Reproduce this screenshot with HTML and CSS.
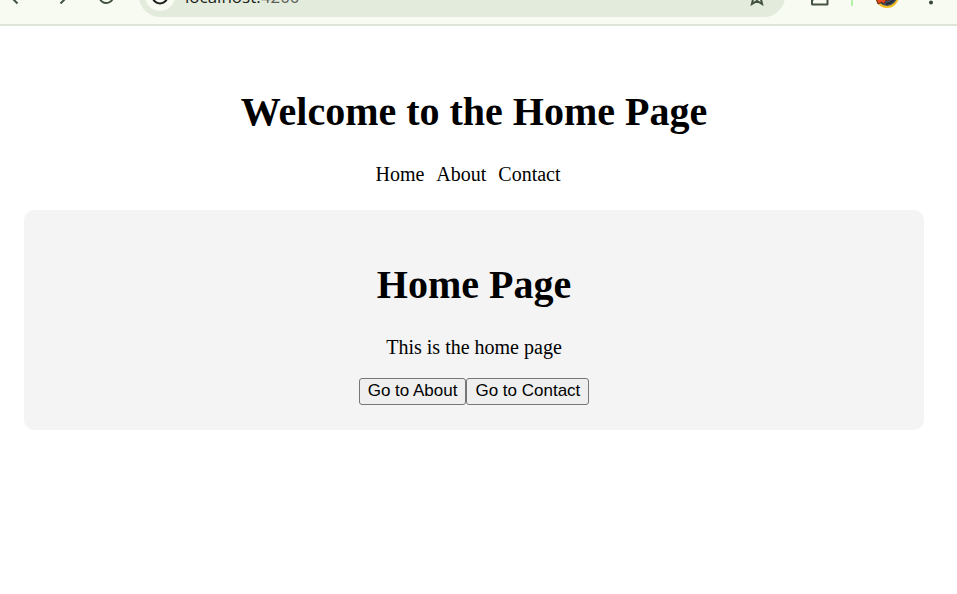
FILE: index.html
```html
<!DOCTYPE html>
<html lang="en">
<head>
<meta charset="utf-8">
<title>Home Page</title>
<link rel="stylesheet" href="styles.css">
</head>
<body>
<header class="chrome">
  <div class="toolbar">
    <button class="tool" aria-label="Back"><svg width="20" height="20" viewBox="0 0 20 20"><path d="M18 10H3M10.500 2.500L3 10l7.500 7.500"/></svg></button>
    <button class="tool" aria-label="Forward"><svg width="20" height="20" viewBox="0 0 20 20"><path d="M2 10h15M9.500 2.500L17 10l-7.500 7.500"/></svg></button>
    <button class="tool" aria-label="Reload"><svg width="20" height="20" viewBox="0 0 20 20"><path d="M18 8A7 7 0 1 0 18 12M18.500 2v6h-6"/></svg></button>
    <div class="address">
      <button class="info" aria-label="Site information"><svg width="20" height="20" viewBox="0 0 20 20"><circle cx="10" cy="10" r="7.500"/><path d="M10 9v3M10 6v1"/></svg></button>
      <div class="url"><span>localhost:</span><span class="port">4200</span></div>
      <button class="star" aria-label="Bookmark"><svg width="20" height="20" viewBox="0 0 20 20"><path d="M10 2l2.200 5.400 5.800.500-4.400 3.800 1.500 6.300L10 14.900 4.900 18l1.500-6.300L2 7.900l5.800-.500z"/></svg></button>
    </div>
    <button class="tool extensions" aria-label="Extensions"><svg width="20" height="20" viewBox="0 0 20 20"><path d="M3 4h5a2.500 2.500 0 0 1 5 0h5.500v14q0 .5-.5.500H3.500q-.5 0-.5-.5v-4.500a2.500 2.500 0 0 0 0-5z"/></svg></button>
    <span class="divider"></span>
    <button class="avatar" aria-label="Profile"><svg width="24" height="24" viewBox="0 0 24 24"><circle class="ring" cx="12" cy="12" r="11"/><path class="flame" d="M1 14l4-5 9-2 1 7-2 3-2-1-2 4-2-2-4 2z"/><path class="streak" d="M11 20q6-1 8-5"/></svg></button>
    <button class="tool menu" aria-label="Menu"><svg width="20" height="20" viewBox="0 0 20 20"><circle cx="10" cy="4" r="2"/><circle cx="10" cy="10" r="2"/><circle cx="10" cy="16.500" r="2"/></svg></button>
  </div>
</header>
<main class="page">
  <h1>Welcome to the Home Page</h1>
  <nav class="nav">
    <a href="#home">Home</a><a href="#about">About</a><a href="#contact">Contact</a>
  </nav>
  <section class="card">
    <h1>Home Page</h1>
    <p>This is the home page</p>
    <div class="actions"><button class="go">Go to About</button><button class="go">Go to Contact</button></div>
  </section>
</main>
</body>
</html>
```
FILE: styles.css
```css
* { box-sizing: border-box; }
body {
  margin: 0;
  background: #fff;
  color: #000;
  font: 20px/24px "Liberation Serif", serif;
}
.chrome {
  display: flex;
  align-items: flex-end;
  height: 26px;
  overflow: hidden;
  background: #f8fbf2;
  border-bottom: 2px solid #dfe4d8;
}
.toolbar {
  display: flex;
  flex: 1;
  align-items: center;
  height: 56px;
  padding: 0 16px 0 7px;
}
.toolbar button {
  display: flex;
  flex: none;
  padding: 0;
  border: 0;
  background: none;
}
.toolbar svg {
  fill: none;
  stroke: #43533f;
  stroke-width: 2;
}
.tool { margin-right: 24px; }
.address {
  display: flex;
  flex: 1;
  align-items: center;
  height: 42px;
  margin-right: 24px;
  padding: 0 18px 0 6px;
  border-radius: 21px;
  background: #e3ebdc;
}
.address .info {
  align-items: center;
  justify-content: center;
  width: 30px;
  height: 30px;
  border-radius: 50%;
  background: #f8fbf2;
}
.address .info svg { stroke: #1b1d1a; }
.url {
  flex: 1;
  margin-left: 10px;
  padding-top: 2px;
  color: #1b1d1a;
  font: 17px/24px "Open Sans", sans-serif;
}
.port { color: #596056; }
.extensions { margin-right: 22px; }
.divider {
  width: 2px;
  height: 20px;
  margin-right: 22px;
  background: #b5f2a9;
}
.avatar { margin-right: 22px; }
.avatar .ring { fill: #435060; stroke: #f2bd20; }
.avatar .flame { fill: #e94c20; stroke: #632b20; stroke-width: 1; }
.avatar .streak { stroke: #242e3a; }
.menu { margin-right: 0; }
.toolbar .menu svg { fill: #364733; stroke: none; }
.page {
  padding: 36px 33px 0 24px;
  text-align: center;
}
h1 {
  margin: 27px 0;
  font-size: 40px;
  line-height: 46px;
}
.nav {
  display: flex;
  justify-content: center;
  margin-bottom: 24px;
}
.nav a {
  margin-right: 12px;
  color: #000;
  text-decoration: none;
}
.card {
  padding: 25px;
  border-radius: 10px;
  background: #f4f4f4;
}
.card p { margin: 0 0 19px; }
.actions {
  display: flex;
  justify-content: center;
}
.go {
  padding: 1px 8px 3px;
  border: 1px solid #767676;
  border-radius: 3px;
  background: #efefef;
  color: #000;
  font: 17px/21px "Liberation Sans", Arial, sans-serif;
}
```
